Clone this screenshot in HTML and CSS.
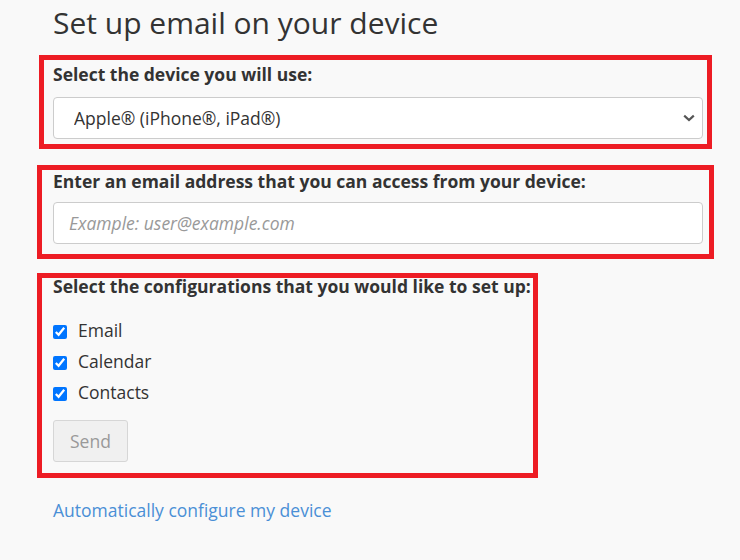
FILE: index.html
```html
<!DOCTYPE html>
<html lang="en">
<head>
<meta charset="utf-8">
<title>Set up email on your device</title>
<link rel="stylesheet" href="styles.css">
</head>
<body>
<main class="page">
  <h1 class="title">Set up email on your device</h1>

  <div class="group group-device">
    <label class="group-label" for="device">Select the device you will use:</label>
    <select id="device" class="control select">
      <option>Apple® (iPhone®, iPad®)</option>
    </select>
  </div>

  <div class="group group-email">
    <label class="group-label" for="email">Enter an email address that you can access from your device:</label>
    <input id="email" class="control input" type="email" placeholder="Example: user@example.com">
  </div>

  <div class="group group-config">
    <div class="group-label">Select the configurations that you would like to set up:</div>
    <div class="checks">
      <label class="check"><input type="checkbox" checked><span>Email</span></label>
      <label class="check"><input type="checkbox" checked><span>Calendar</span></label>
      <label class="check"><input type="checkbox" checked><span>Contacts</span></label>
    </div>
    <button class="send" type="button" disabled>Send</button>
  </div>

  <a class="auto-link" href="#">Automatically configure my device</a>
</main>
</body>
</html>
```

FILE: styles.css
```css
*, *::before, *::after { box-sizing: border-box; }

html, body {
  margin: 0;
  padding: 0;
  background: #f9f9f9;
}

body {
  font-family: "Open Sans", "Liberation Sans", sans-serif;
  color: #333;
}

.page {
  width: 650px;
  margin-left: 53px;
  padding-top: 6px;
  display: flex;
  flex-direction: column;
  align-items: flex-start;
}

.title {
  margin: 0 0 24px;
  font-size: 30px;
  line-height: 33px;
  font-weight: 400;
  color: #333;
}

.group {
  position: relative;
  width: 100%;
  margin-bottom: 31px;
}

.group::before {
  content: "";
  position: absolute;
  border: 5px solid #ed1c24;
  pointer-events: none;
}

.group-device::before { top: -8px; left: -14px; right: -9px; bottom: -10px; }
.group-email::before { top: -5px; left: -16px; right: -11px; bottom: -15px; }
.group-config::before { top: -2px; left: -16px; width: 501px; bottom: -16px; }

.group-label {
  display: block;
  font-size: 17.5px;
  line-height: 22px;
  font-weight: 700;
  color: #333;
  margin-bottom: 12px;
}

.group-email .group-label { margin-bottom: 10px; }

.control {
  display: block;
  width: 100%;
  height: 42px;
  margin: 0;
  border: 1px solid #ccc;
  border-radius: 4px;
  background-color: #fff;
  font-family: "Open Sans", "Liberation Sans", sans-serif;
  font-size: 17.5px;
  color: #333;
}

.select {
  -webkit-appearance: none;
  appearance: none;
  padding: 0 40px 0 20px;
  background-image: url("data:image/svg+xml;utf8,<svg xmlns='http://www.w3.org/2000/svg' width='12' height='8' viewBox='0 0 12 8'><path d='M1.2 1.6 L6 6 L10.8 1.6' fill='none' stroke='%23555' stroke-width='2.2'/></svg>");
  background-repeat: no-repeat;
  background-position: right 7px center;
  background-size: 12px 8px;
}

.input {
  padding: 0 15px;
}

.input::placeholder {
  color: #999;
  font-style: italic;
}

.checks {
  display: flex;
  flex-direction: column;
  margin-top: 18px;
}

.check {
  display: flex;
  align-items: center;
  height: 31px;
  font-size: 17.5px;
  line-height: 31px;
  color: #333;
}

.check input {
  width: 14px;
  height: 14px;
  margin: 3px 11px 0 0;
}

.send {
  margin-top: 12px;
  height: 42px;
  padding: 0 16px;
  border: 1px solid #d6d6d6;
  border-radius: 3px;
  background: #f0f0f0;
  color: #999;
  font-family: "Open Sans", "Liberation Sans", sans-serif;
  font-size: 17.5px;
}

.auto-link {
  margin-top: 5px;
  font-size: 17.5px;
  line-height: 24px;
  color: #4a8fd6;
  text-decoration: none;
}
```
